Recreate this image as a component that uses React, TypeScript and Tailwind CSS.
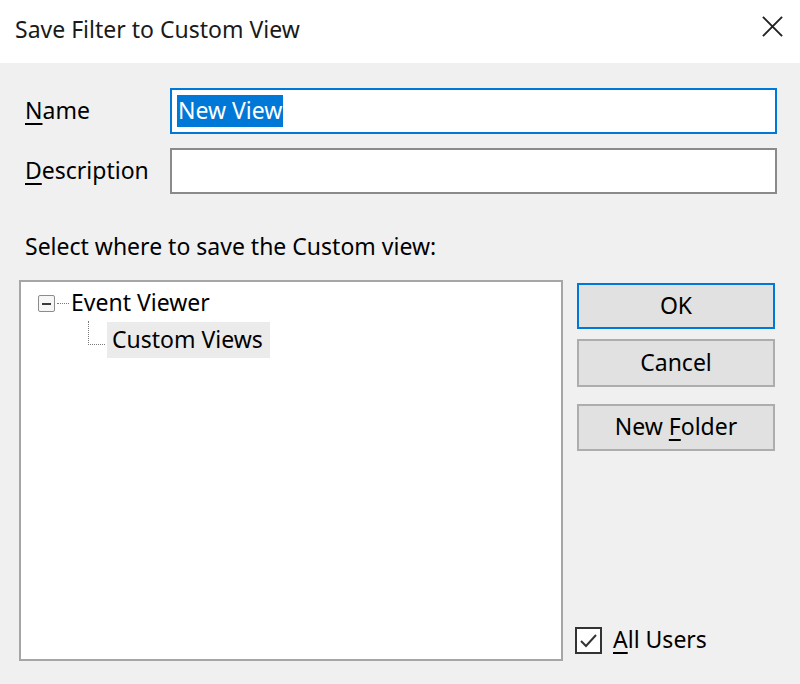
import React from "react";

export default function App() {
  const font = { fontFamily: '"Noto Sans", "Open Sans", sans-serif' };
  return (
    <div className="w-[800px] h-[684px] bg-[#f0f0f0] flex flex-col text-[#000] text-[23px]" style={font}>
      <div className="h-[63px] bg-white flex items-center justify-between pl-[15px] pr-[16px]">
        <span className="text-[23px] text-[#1a1a1a] leading-none pb-[4px]">Save Filter to Custom View</span>
        <svg width="23" height="23" viewBox="0 0 24 24" className="mb-[10px]">
          <path d="M2 2 L22 22 M22 2 L2 22" stroke="#222" strokeWidth="2" fill="none" />
        </svg>
      </div>
      <div className="flex-1 flex flex-col pt-[25px] pl-[19px] pr-[23px] pb-[23px]">
        <div className="flex items-center h-[46px]">
          <div className="w-[151px] pl-[6px] leading-none pb-[2px]"><span className="underline underline-offset-4">N</span>ame</div>
          <div className="flex-1 h-[46px] bg-white border-2 border-[#0078d7] flex items-center pl-[5px]">
            <span className="bg-[#0078d7] text-white h-[32px] px-[1px] flex items-center leading-none pb-[2px]">New View</span>
          </div>
        </div>
        <div className="flex items-center h-[46px] mt-[14px]">
          <div className="w-[151px] pl-[6px] leading-none pb-[2px]"><span className="underline underline-offset-4">D</span>escription</div>
          <div className="flex-1 h-[46px] bg-white border-2 border-[#8a8a8a]"></div>
        </div>
        <div className="pl-[6px] mt-[41px] leading-none h-[26px]">Select where to save the Custom view:</div>
        <div className="flex-1 flex mt-[19px]">
          <div className="w-[544px] bg-white border-2 border-[#a6a6a6] pt-[12px] pl-[17px]">
            <div className="flex items-center h-[19px]">
              <div className="w-[17px] h-[17px] border border-[#8c8c8c] rounded-[2px] bg-[#f6f6f6] flex items-center justify-center">
                <div className="w-[9px] h-[2px] bg-[#3a3a3a]"></div>
              </div>
              <div className="w-[12px] border-t border-dotted border-[#7a7a7a] mx-[2px]"></div>
              <span className="leading-none pb-[2px]">Event Viewer</span>
            </div>
            <div className="flex pl-[50px] mt-[9px]">
              <div className="w-[17px] h-[24px] border-l border-b border-dotted border-[#7a7a7a] -mt-[1px]"></div>
              <div className="bg-[#ebebeb] h-[36px] w-[163px] flex items-center pl-[5px] leading-none pb-[2px] ml-[2px]">Custom Views</div>
            </div>
          </div>
          <div className="flex-1 flex flex-col pl-[14px] pt-[3px]">
            <button className="h-[46px] w-[198px] bg-[#e1e1e1] border-2 border-[#0078d7] leading-none pb-[2px]">OK</button>
            <button className="h-[48px] w-[198px] bg-[#e1e1e1] border-2 border-[#adadad] mt-[10px] leading-none pb-[2px]">Cancel</button>
            <button className="h-[47px] w-[198px] bg-[#e1e1e1] border-2 border-[#adadad] mt-[17px] leading-none pb-[2px]">New <span className="underline underline-offset-4">F</span>older</button>
            <div className="flex-1"></div>
            <div className="flex items-center mb-[7px]">
              <div className="w-[27px] h-[27px] border-2 border-[#333] bg-white flex items-center justify-center -ml-[2px]">
                <svg width="19" height="19" viewBox="0 0 19 19">
                  <path d="M2 10 L7 15 L17 4" stroke="#333" strokeWidth="2" fill="none" />
                </svg>
              </div>
              <span className="ml-[11px] leading-none pb-[2px]"><span className="underline underline-offset-4">A</span>ll Users</span>
            </div>
          </div>
        </div>
      </div>
    </div>
  );
}
